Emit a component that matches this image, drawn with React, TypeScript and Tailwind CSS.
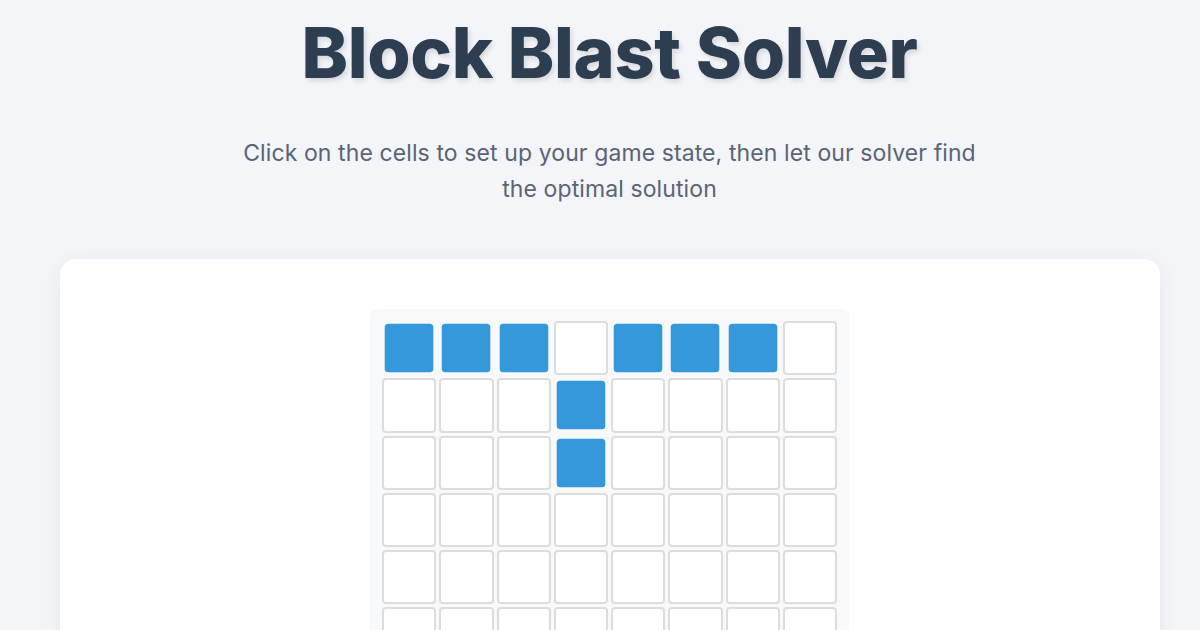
const filled = new Set(["0-0", "0-1", "0-2", "0-4", "0-5", "0-6", "1-3", "2-3"])

export default function App() {
  const rows = Array.from({ length: 8 }, (_, r) => r)
  const cols = Array.from({ length: 8 }, (_, c) => c)

  return (
    <div className="min-h-[630px] bg-[#f4f5f8] pl-[19px] font-['Inter','Liberation_Sans',sans-serif]">
      <div className="flex flex-col items-center">
        <h1 className="mt-[13px] text-[70px] font-extrabold leading-[80px] tracking-[-0.3px] text-[#2c3e50] [text-shadow:2px_3px_5px_rgba(0,0,0,0.12)]">
          Block Blast Solver
        </h1>
        <p className="mt-[42px] w-[760px] text-center text-[23px] leading-[36px] tracking-[0.1px] text-[#5a6476]">
          Click on the cells to set up your game state, then let our solver find the optimal solution
        </p>
        <div className="mt-[52px] w-[1100px] rounded-2xl bg-white pt-[50px] pb-10 shadow-[0_4px_20px_rgba(0,0,0,0.06)]">
          <div className="mx-auto w-[479px] rounded-lg bg-[#f8f9fa] p-3">
            <div className="grid grid-cols-8 gap-[3px]">
              {rows.map((r) =>
                cols.map((c) =>
                  filled.has(`${r}-${c}`) ? (
                    <div key={`${r}-${c}`} className="aspect-square rounded-[4px] border-2 border-[#3498db] bg-[#3498db] scale-90" />
                  ) : (
                    <div key={`${r}-${c}`} className="aspect-square rounded-[4px] border-2 border-[#dddddd] bg-white" />
                  )
                )
              )}
            </div>
          </div>
        </div>
      </div>
    </div>
  )
}
